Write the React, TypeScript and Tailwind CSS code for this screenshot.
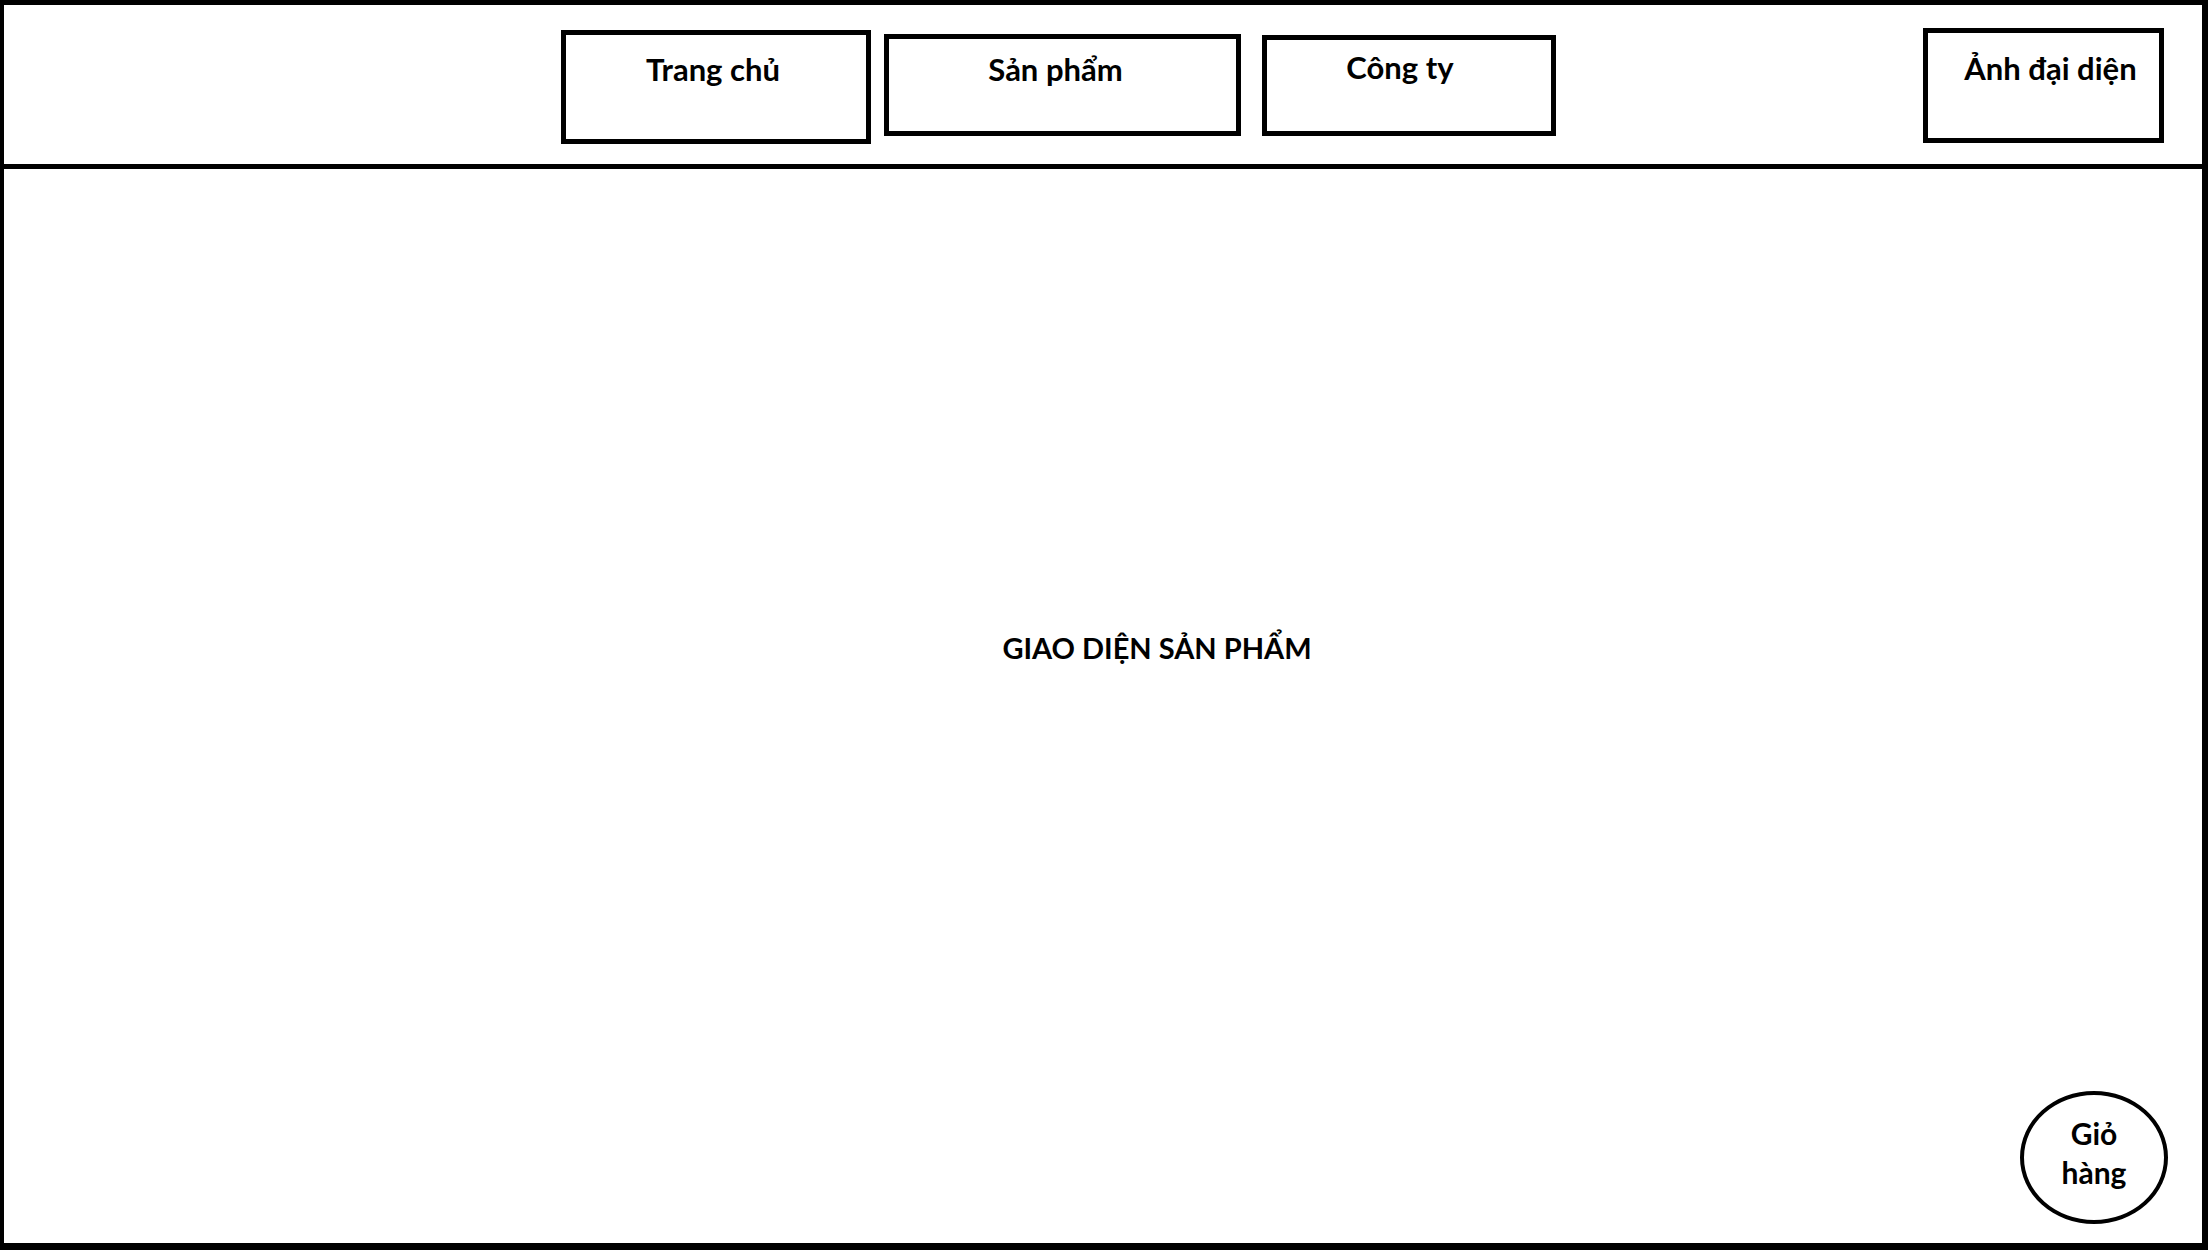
import type { ReactNode } from "react";

const font = { fontFamily: "Lato, 'Noto Sans', sans-serif" };

function NavBox({ className, children }: { className: string; children: ReactNode }) {
  return (
    <div className={`flex shrink-0 justify-center border-[5px] border-black bg-white font-bold text-black ${className}`}>
      <span className="whitespace-nowrap">{children}</span>
    </div>
  );
}

export default function App() {
  return (
    <div
      className="flex h-[1250px] w-[2208px] flex-col border-t-[5px] border-r-[6px] border-b-[7px] border-l-4 border-black bg-white text-black"
      style={font}
    >
      <header className="flex h-[164px] shrink-0 items-start border-b-[5px] border-black">
        <NavBox className="ml-[557px] mt-[25px] h-[114px] w-[310px] pt-[14px] pr-[6px] text-[31px] leading-[40px]">Trang chủ</NavBox>
        <NavBox className="ml-[13px] mt-[29px] h-[102px] w-[357px] pt-[10px] pr-[14px] text-[31px] leading-[40px]">Sản phẩm</NavBox>
        <NavBox className="ml-[21px] mt-[30px] h-[101px] w-[294px] pt-[7px] pr-[18px] text-[31px] leading-[40px]">Công ty</NavBox>
        <NavBox className="ml-[367px] mt-[23px] h-[115px] w-[241px] pt-[15px] pl-[14px] text-[31px] leading-[40px]">Ảnh đại diện</NavBox>
      </header>

      <main className="flex flex-1 flex-col">
        <div className="flex justify-center pt-[461px] pl-[108px]">
          <span className="text-[29px] leading-[36px] font-bold whitespace-nowrap">GIAO DIỆN SẢN PHẨM</span>
        </div>
        <div className="mt-auto flex justify-end pr-[34px] pb-[19px]">
          <div className="flex h-[133px] w-[148px] flex-col items-center justify-center rounded-[50%] border-4 border-black pb-[10px] text-[30px] leading-[39px] font-bold">
            <span>Giỏ</span>
            <span>hàng</span>
          </div>
        </div>
      </main>
    </div>
  );
}
